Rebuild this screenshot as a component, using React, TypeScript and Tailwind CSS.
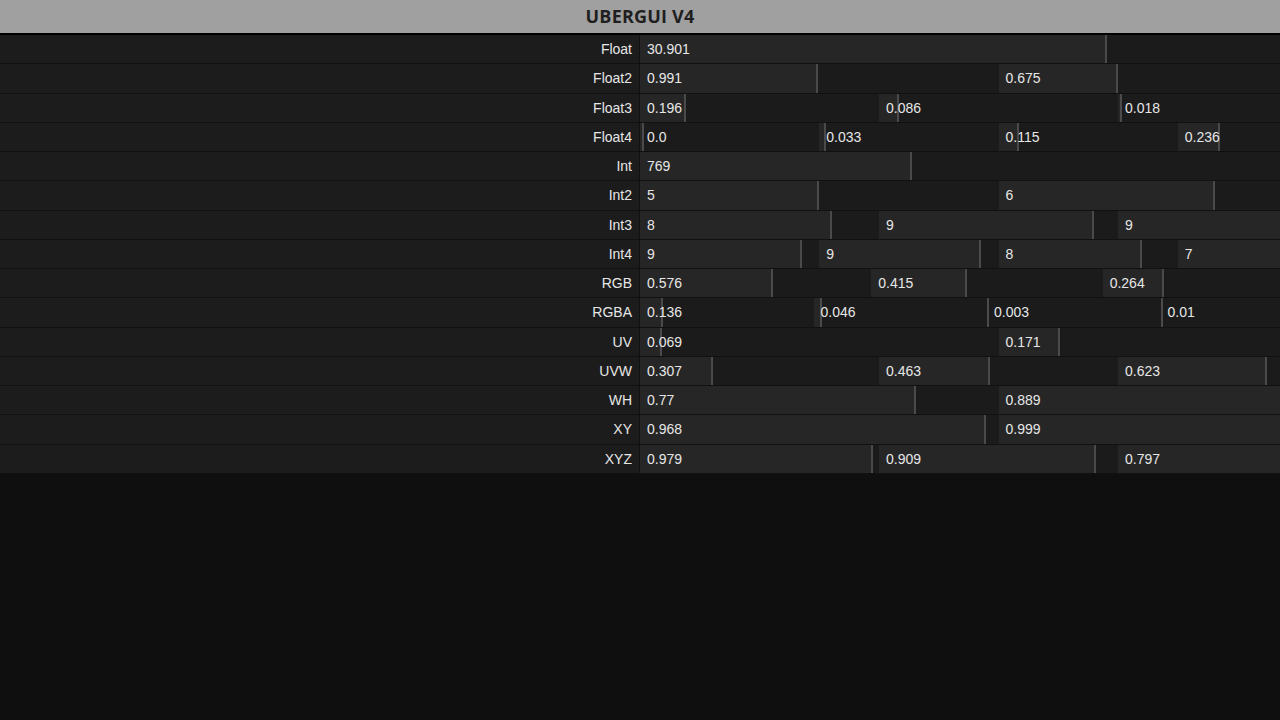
type Param = {
  label: string;
  values: string[];
  fills: number[]; // 0..1 of each cell
  swatch?: boolean;
};

const params: Param[] = [
  { label: 'Float', values: ['30.901'], fills: [0.648] },
  { label: 'Float2', values: ['0.991', '0.675'], fills: [0.4905, 0.327] },
  { label: 'Float3', values: ['0.196', '0.086', '0.018'], fills: [0.186, 0.076, 0.01] },
  { label: 'Float4', values: ['0.0', '0.033', '0.115', '0.236'], fills: [0.01, 0.025, 0.105, 0.226] },
  { label: 'Int', values: ['769'], fills: [0.376] },
  { label: 'Int2', values: ['5', '6'], fills: [0.495, 0.597] },
  { label: 'Int3', values: ['8', '9', '9'], fills: [0.793, 0.893, 0.893] },
  { label: 'Int4', values: ['9', '9', '8', '7'], fills: [0.89, 0.89, 0.79, 0.69] },
  { label: 'RGB', values: ['0.576', '0.415', '0.264'], fills: [0.568, 0.407, 0.256], swatch: true },
  { label: 'RGBA', values: ['0.136', '0.046', '0.003', '0.01'], fills: [0.12, 0.035, 0.002, 0.005], swatch: true },
  { label: 'UV', values: ['0.069', '0.171'], fills: [0.055, 0.166] },
  { label: 'UVW', values: ['0.307', '0.463', '0.623'], fills: [0.295, 0.455, 0.615] },
  { label: 'WH', values: ['0.77', '0.889'], fills: [0.765, 0.885] },
  { label: 'XY', values: ['0.968', '0.999'], fills: [0.96, 0.995] },
  { label: 'XYZ', values: ['0.979', '0.909', '0.797'], fills: [0.965, 0.9, 0.79] },
];

function SliderCell({ value, fill }: { value: string; fill: number }) {
  return (
    <div className="relative flex-1 h-full bg-[#1b1b1b] overflow-hidden">
      <div
        className="absolute left-0 top-0 bottom-0 bg-[#262626] border-r-2 border-[#4a4a4a]"
        style={{ width: `calc(${fill * 100}% + 2px)` }}
      />
      <span className="relative pl-[7px] leading-[29px] text-[14px] text-[#e6e6e6]">{value}</span>
    </div>
  );
}

function Row({ p }: { p: Param }) {
  return (
    <div className="flex h-[29.25px] border-b border-[#111111]">
      <div className="w-[640px] shrink-0 flex items-center justify-end pr-[7px] pt-[1px] bg-[#1c1c1c] border-r border-[#111111] text-[14px] text-[#e6e6e6]">
        {p.label}
      </div>
      <div className="w-[717px] shrink-0 flex">
        <div className="flex flex-1 h-full">
          {p.values.map((v, i) => (
            <SliderCell key={i} value={v} fill={p.fills[i]} />
          ))}
        </div>
        {p.swatch && <div className="w-[23px] h-full bg-[#6a4a33]" />}
      </div>
    </div>
  );
}

export default function App() {
  return (
    <div
      className="w-[1280px] h-[720px] overflow-hidden bg-[#0f0f0f]"
      style={{ fontFamily: '"Liberation Sans", Arial, sans-serif' }}
    >
      <div className="h-[33px] bg-[#a0a0a0] flex items-center justify-center">
        <span
          className="text-[18px] font-bold text-[#1f1f1f] tracking-[0.2px]"
          style={{ fontFamily: '"Open Sans", "Noto Sans", sans-serif' }}
        >
          UBERGUI V4
        </span>
      </div>
      <div className="h-[2px] bg-black" />
      <div className="flex flex-col">
        {params.map((p) => (
          <Row key={p.label} p={p} />
        ))}
      </div>
    </div>
  );
}
